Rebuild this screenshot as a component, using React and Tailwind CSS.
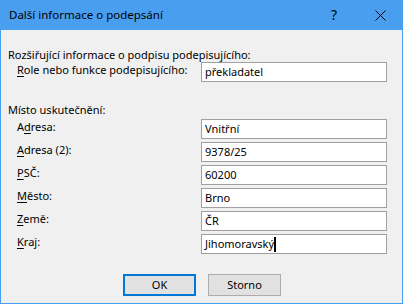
import React from 'react';

const font = { fontFamily: '"Segoe UI", "Noto Sans", sans-serif' };

function U({ children }) {
  return <span className="underline underline-offset-2">{children}</span>;
}

function Field({ label, value, caret }) {
  return (
    <div className="flex items-start h-[20px]">
      <div className="w-[200px] pl-[16px] leading-[16px] text-black whitespace-nowrap">{label}</div>
      <div className="w-[186px] h-[20px] border border-[#a0a0a0] bg-white flex items-center px-[3px] leading-[16px] text-black whitespace-nowrap">
        <span>{value}</span>
        {caret && <span className="inline-block w-[2px] h-[15px] bg-black" />}
      </div>
    </div>
  );
}

export default function App() {
  return (
    <div className="w-[403px] h-[304px] bg-[#f0f0f0] border border-t-0 border-[#4a9ef0] flex flex-col text-[11px]" style={font}>
      {/* Title bar */}
      <div className="h-[30px] -mx-px bg-[#4a9ef0] flex items-center pl-[9px] text-black text-[11.5px]">
        <span className="flex-1 leading-[16px]">Další informace o podepsání</span>
        <span className="w-[46px] text-center text-[14px] leading-[16px]">?</span>
        <span className="w-[46px] flex justify-center">
          <svg width="11" height="11" viewBox="0 0 11 11">
            <path d="M0.5 0.5 L10.5 10.5 M10.5 0.5 L0.5 10.5" stroke="#000" strokeWidth="1" />
          </svg>
        </span>
      </div>

      {/* Body */}
      <div className="flex flex-col pt-[17px]">
        <div className="pl-[7px] h-[15px] leading-[16px] whitespace-nowrap">Rozšiřující informace o podpisu podepisujícího:</div>
        <Field label={<><U>R</U>ole nebo funkce podepisujícího:</>} value="překladatel" />

        <div className="pl-[7px] mt-[20px] h-[16px] leading-[16px]">Místo uskutečnění:</div>
        <div className="flex flex-col gap-[3px] mt-[1px]">
          <Field label={<>A<U>d</U>resa:</>} value="Vnitřní" />
          <Field label={<><U>A</U>dresa (2):</>} value="9378/25" />
          <Field label={<><U>P</U>SČ:</>} value="60200" />
          <Field label={<><U>M</U>ěsto:</>} value="Brno" />
          <Field label={<><U>Z</U>emě:</>} value="ČR" />
          <Field label={<><U>K</U>raj:</>} value="Jihomoravský" caret />
        </div>

        <div className="flex mt-[20px] pl-[122px] gap-[12px]">
          <button className="w-[73px] h-[22px] bg-[#e1e1e1] border-2 border-[#0078d7] text-black leading-[16px]">OK</button>
          <button className="w-[73px] h-[22px] bg-[#e1e1e1] border border-[#adadad] text-black leading-[16px]">Storno</button>
        </div>
      </div>
    </div>
  );
}
